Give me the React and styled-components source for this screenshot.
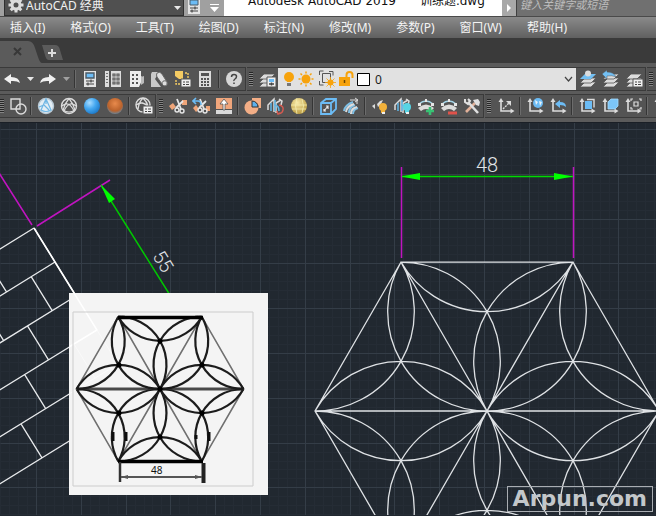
import React from 'react';
import styled, { createGlobalStyle } from 'styled-components';

const GlobalStyle = createGlobalStyle`
*{
  box-sizing: border-box;
}
body{
  margin: 0;
  background: #212830;
  font-family: "Noto Sans", "Noto Sans CJK SC", sans-serif;
  font-size: 12px;
}
button, select, input{
  font: inherit;
  color: inherit;
  margin: 0;
  padding: 0;
  border: 0;
  border-radius: 0;
  background: none;
}
svg{
  display: block;
}
`

const Window = styled.div`
display: flex;
flex-direction: column;
height: 100vh;
overflow: hidden;
`

/* title bar */
const TitleBar = styled.header`
display: flex;
height: 17px;
padding-left: 4px;
overflow: hidden;
background: #a0a0a0;
border-bottom: 1px solid #4a4a4a;
`

const Workspace = styled.label`
display: flex;
align-items: center;
width: 180px;
height: 16px;
padding: 0 2px 0 3px;
background: #505050;
border: 1px solid #303030;
border-top: 0;
color: #f0f0f0;

select{
  flex: 1;
  min-width: 0;
  height: 20px;
  margin: -4px 0 0 2px;
  font-size: 12px;
  line-height: 20px;
  appearance: none;
  outline: none;
}
`

const TitleTool = styled.button`
display: flex;
align-items: center;
justify-content: center;
width: 20px;
height: 16px;
`

const DocTitle = styled.h1`
flex: 1;
display: flex;
gap: 24px;
margin: 0;
padding-left: 24px;
background: #fff;
color: #111;
font-family: "DejaVu Sans", "Noto Sans CJK SC", sans-serif;
font-size: 12px;
font-weight: 400;
line-height: 2px;
white-space: nowrap;
`

const Expand = styled.button`
display: flex;
align-items: center;
justify-content: center;
width: 14px;
height: 16px;
background: #a8a8a8;
`

const Search = styled.input`
width: 140px;
height: 16px;
padding: 0 0 7px 3px;
background: #707070;
border-left: 1px solid #404040;
outline: none;

&::placeholder{
  color: #bdbdbd;
  font-style: italic;
  font-size: 11px;
  opacity: 1;
}
`

const MenuBar = styled.nav`
display: flex;
align-items: center;
gap: 25px;
height: 21px;
padding-left: 10px;
background: linear-gradient(#8a8a8a, #606060);
color: #f4f4f4;
white-space: nowrap;
`

const MenuItem = styled.button`
line-height: 20px;
`

/* file tabs */
const TabBar = styled.div`
display: flex;
height: 25px;
background: #3a3a3a;

svg{
  height: 25px;
}
`

const TabButton = styled.button`
display: block;
`

/* toolbars */
const Toolbars = styled.div`
display: flex;
flex-direction: column;
gap: 3px;
padding: 4px 0;
background: #5b5b5b;
`

const ToolRow = styled.div`
display: flex;
gap: 1px;
height: 24px;
overflow: hidden;
`

const Group = styled.div`
display: flex;
align-items: center;
flex: ${p => (p.$grow ? '1 0 0' : 'none')};
height: 24px;
background: #545454;
border: 1px solid #3a3a3a;
border-width: ${p => (p.$open ? '1px 0' : '1px 1px 1px 0')};
`

const Tool = styled.button`
display: flex;
align-items: center;
justify-content: center;
flex: none;
width: ${p => p.$w || 23}px;
height: 22px;

&:hover{
  background: #6a6a6a;
}
`

const Sep = styled.span`
flex: none;
width: 2px;
height: 18px;
margin: 0 2px;
background: #353535;
border-right: 1px solid #6c6c6c;
`

const Grip = styled.span`
flex: none;
width: 5px;
height: 14px;
margin-right: 2px;
margin-left: ${p => (p.$first ? 0 : 2)}px;
background: repeating-linear-gradient(#262626 0 1px, #858585 1px 2px);
border-right: 1px solid #545454;
`

const LayerBox = styled.label`
display: flex;
align-items: center;
flex: 1;
min-width: 0;
height: 22px;
padding: 0 3px 0 4px;
background: #e1e1e1;
color: #1c1c1c;

select{
  flex: 1;
  min-width: 0;
  height: 20px;
  padding-left: 3px;
  appearance: none;
  outline: none;
}
`

/* drawing area */
const Canvas = styled.main`
position: relative;
flex: 1;
min-height: 0;
overflow: hidden;
background: #212830;
border-top: 1px solid #1a1f26;
`

const Model = styled.svg`
position: absolute;
left: 0;
top: -1px;
width: 100%;
height: 100%;
`

const Sample = styled.figure`
position: absolute;
left: 69px;
top: 170px;
margin: 0;
background: #f4f4f4;
`

const Watermark = styled.div`
position: absolute;
right: 3px;
bottom: 4px;
padding: 0 5px;
border: 1px solid #a9adb2;
color: #c3c7ca;
font: bold 22px/24px "DejaVu Sans", sans-serif;
`

const Icon = ({ size = 18, children }) => (
  <svg width={size} height={size} viewBox="0 0 18 18" fill="none" stroke="#dcdcdc" strokeWidth="1.4">
    {children}
  </svg>
)

const Down = ({ color = '#e8e8e8' }) => (
  <svg width="7" height="4" viewBox="0 0 7 4"><path d="M0 0h7L3.500 4z" fill={color} /></svg>
)

const Gear = () => (
  <svg width="16" height="16" viewBox="0 0 16 16">
    <g transform="translate(8 5)">
      <circle r="4" fill="none" stroke="#dcdcdc" strokeWidth="3" />
      {[0, 45, 90, 135].map(a => (
        <path key={a} transform={`rotate(${a})`} d="M-1.500-7.500h3v3h-3zM-1.500 4.500h3v3h-3z" fill="#dcdcdc" />
      ))}
    </g>
  </svg>
)

const PropsShape = () => (
  <g stroke="none">
    <path d="M3 1h12v16H3z" fill="#e4e4e4" />
    <path d="M5 3h8v5H5z" fill="#6cbcf5" stroke="#4a5a66" />
    <path d="M5 11h8M5 14h8M10 9.500v3M7 12.500v3" stroke="#444" strokeWidth="1.200" />
  </g>
)

const Scissors = () => (
  <g>
    <path d="M8 2l4 10M14 4l-7 7" strokeWidth="1.800" stroke="#e6e6e6" />
    <circle cx="8" cy="13" r="2" stroke="#e6e6e6" />
    <circle cx="13" cy="14" r="2" stroke="#e6e6e6" />
  </g>
)

const Axes = ({ children }) => (
  <Icon>
    <path d="M4 3v11h12" strokeWidth="1.600" />
    <path d="M1.500 5L4 1l2.500 4zM13.500 11.500l4 2.500-4 2.500z" fill="#dcdcdc" stroke="none" />
    {children}
  </Icon>
)

const sheets = (
  <g fill="#dcdcdc" stroke="#545454" strokeWidth="0.800">
    <path d="M1 17l5-5h11l-5 5z" />
    <path d="M1 13l5-5h11l-5 5z" />
    <path d="M1 9l5-5h11l-5 5z" />
  </g>
)

const listBadge = (
  <g>
    <path d="M8 9h10v8H8z" fill="#f0f0f0" stroke="#545454" strokeWidth="1" />
    <path d="M10 12h2m1 0h3M10 14.500h2m1 0h3" stroke="#444" strokeWidth="1" />
  </g>
)

const arch = (
  <g>
    <path d="M1 11q8-7 16 0l-3 3q-5-4-10 0z" fill="#dcdcdc" stroke="none" />
    <path d="M2 7q7-6 14 0" stroke="#a5d5e8" />
    <path d="M1 6h3v3H1zM14 6h3v3h-3zM8 2h2v3H8z" fill="#e6e6e6" stroke="none" />
  </g>
)

const twist = (
  <g strokeWidth="1.500">
    <path d="M1 13V8l3-3 3-3v13M9 16V6l5-3" />
    <path d="M4 14V6M8 3v11M7 8q5 0 5 6" stroke="#5fb7e8" />
    <path d="M12 2l3 2-1 4" />
  </g>
)

const Bulb = ({ x, y, color }) => (
  <g stroke="none">
    <circle cx={x} cy={y} r="4" fill={color} />
    <path d={`M${x - 2} ${y + 3}h4v3h-4z`} fill={color} />
    <path d={`M${x - 1} ${y + 5}h3v2h-3z`} fill="#eee" />
  </g>
)

const icons = {
  undo: <path d="M1 9l7-5v3q8 0 9 6-3-2.500-9-2V14z" fill="#f0f0f0" stroke="none" />,
  redo: <path d="M17 9l-7-5v3q-8 0-9 6 3-2.500 9-2V14z" fill="#f0f0f0" stroke="none" />,
  properties: <PropsShape />,
  designCenter: (
    <g>
      <path d="M1 1h4v16H1zM7 1h10v16H7z" fill="#dcdcdc" stroke="none" />
      <path d="M3 3v12" stroke="#444" strokeDasharray="1 2" />
      <path d="M9 4h2v2H9zM13 4h2v2h-2zM9 8h2v2H9zM13 8h2v2h-2zM9 12h2v2H9zM13 12h2v2h-2z" stroke="#555" strokeWidth="1.200" />
    </g>
  ),
  palettes: (
    <g stroke="none">
      <path d="M3 1h11v5l2 2-4 9H3z" fill="#ededed" />
      <path d="M5 4h2v2H5zM9 4h2v2H9zM5 8h2v2H5zM9 8h2v2H9zM5 12h2v2H5zM9 12h2v2H9z" fill="#555" />
      <path d="M14 7l3-1v7l-3 2z" fill="#bbb" />
    </g>
  ),
  sheetSet: (
    <g>
      <path d="M2 2h7l-4 7 6 8H1V4z" fill="#c9c9c9" stroke="none" />
      <path d="M7 3q3-2 5 1l5 8q1 4-2 4-2 0-3-2L7 7q-1-2 0-4z" fill="#dedede" stroke="#666" strokeWidth="1" />
      <path d="M12 14q0-4 4-3" stroke="#666" strokeWidth="1" />
    </g>
  ),
  markup: (
    <g>
      <path d="M2 1h8v8H6l-4-3z" fill="#f4cb63" stroke="none" />
      <path d="M12 3h3v5M3 10v4h4" stroke="#f4cb63" strokeDasharray="2 1" />
      {listBadge}
    </g>
  ),
  calc: (
    <g stroke="none">
      <path d="M3 1h12v16H3z" fill="#dcdcdc" />
      <path d="M5 3h8v3H5zM5 8h2v2H5zM8 8h2v2H8zM11 8h2v2h-2zM5 11h2v2H5zM8 11h2v2H8zM11 11h2v2h-2zM5 14h2v2H5zM8 14h2v2H8zM11 14h2v2h-2z" fill="#555" />
    </g>
  ),
  help: (
    <g>
      <circle cx="9" cy="9" r="8" fill="#d6d6d6" stroke="none" />
      <path d="M6.500 7q0-2.500 2.500-2.500t2.500 2q0 1.500-1.500 2.500T9 11M9 12.500v1.500" stroke="#444" strokeWidth="1.500" />
    </g>
  ),
  layerProps: (
    <g>
      {sheets}
      <path d="M9 7h9v10H9z" fill="#eee" stroke="#545454" strokeWidth="1" />
      <path d="M11 9h5v3h-5z" fill="#6cbcf5" stroke="none" />
      <path d="M11 14h5M13.500 12.500v3" stroke="#444" />
    </g>
  ),
  layerCurrent: (
    <g>
      {sheets}
      <path d="M1 9l5-5h11l-5 5z" fill="#72bff3" stroke="none" />
      <circle cx="9" cy="3.500" r="3" fill="#dcdcdc" stroke="none" />
    </g>
  ),
  layerPrev: (
    <g>
      {sheets}
      <path d="M0 4l5-4v2q7 0 9 5-4-2-9-1v3z" fill="#72bff3" stroke="#545454" strokeWidth="0.500" />
    </g>
  ),
  layerState: <g>{sheets}{listBadge}</g>,
  shapes: <g><path d="M2 2h9v10H2z" /><circle cx="12" cy="12" r="5" /></g>,
  sphereA: (
    <g>
      <circle cx="9" cy="9" r="7.500" fill="#e3eef5" stroke="#b9cad6" />
      <path d="M9 2L4 13q5 3 10 0zM9 2v5M2 10l5-2 5 5" stroke="#6fb6e4" strokeWidth="1.200" />
    </g>
  ),
  sphereB: (
    <g>
      <circle cx="9" cy="9" r="7.500" />
      <path d="M9 1.500Q5 6 3 13q6 4 12 0-2-7-6-11.500M2 9q7-6 12 5M16 9Q9 3 4 14" strokeWidth="1.200" />
    </g>
  ),
  ballBlue: <circle cx="9" cy="9" r="8" fill="url(#blueBall)" stroke="none" />,
  ballOrange: <circle cx="9" cy="9" r="8" fill="url(#orangeBall)" stroke="none" />,
  visualStyles: (
    <g>
      <circle cx="8" cy="8" r="7" />
      <path d="M8 1Q4 5 3 12M8 1q4 4 5 8M1 8q7-5 12 2" />
      {listBadge}
    </g>
  ),
  cut: <g><path d="M0 9l4-3 3 4-4 3zM13 3h5v5h-5z" fill="#efa579" stroke="none" /><Scissors /></g>,
  cutBack: (
    <g>
      <path d="M1 11l3-3 3 4-3 3zM14 9h4v5h-4z" fill="#efa579" stroke="none" />
      <Scissors />
      <path d="M1 4h5q3 0 3 4M4 1L1 4l3 3" fill="none" stroke="#6cbcf5" strokeWidth="1.600" />
    </g>
  ),
  extrude: (
    <g stroke="none">
      <path d="M1 1h16v11H1z" fill="#f0a67c" />
      <path d="M1 13h16v4H1z" fill="#dadada" />
      <path d="M9 2l4 5h-3v6H8V7H5z" fill="#fff" stroke="#555" strokeWidth="0.800" />
    </g>
  ),
  subtract: (
    <g>
      <path d="M8 1h9v10h-2a7 7 0 0 0-7-7z" fill="#f3ae86" stroke="none" />
      <circle cx="7.500" cy="10.500" r="7" fill="#f3ae86" stroke="none" />
      <path d="M8 4v6h6a6 6 0 0 0-6-6z" fill="#5db0ec" stroke="#333" strokeWidth="1" />
    </g>
  ),
  twistRed: <g>{twist}<path d="M12 8q5 1 4 5t-4 3M10 14l1 3 3-1" stroke="#d85a50" /></g>,
  globe: (
    <g>
      <circle cx="9" cy="9" r="8" fill="url(#goldBall)" stroke="none" />
      <path d="M1 8h16M2 12h14M7 1q-3 8 0 16M12 2q3 7 0 14" stroke="#f5edb0" strokeWidth="0.800" />
    </g>
  ),
  box: (
    <g stroke="#6cbcf5" strokeWidth="1.800">
      <path d="M2 6l5-4h10v10l-5 5H2zM2 6h10v11M12 6l5-4" />
      <path d="M5 14l4-5M7 9h2v3M5 12v2h2" stroke="#e8e8e8" strokeWidth="1.200" />
    </g>
  ),
  sweep: (
    <g strokeWidth="2">
      <path d="M2 14q1-6 9-9M7 16q0-6 6-8M11 17q0-5 5-6" stroke="#7ec0e6" />
      <path d="M4 15q1-6 8-8M9 17q0-6 6-7" />
      <path d="M8 3h7v4M13 1l3 2-3 2" strokeWidth="1" />
    </g>
  ),
  bulbArc: <g><path d="M1 9l3-2v5zM6 7l3-3 3-1-2 4-3 3z" fill="#dcdcdc" stroke="none" /><Bulb x={12} y={10} color="#f2b13a" /></g>,
  bulbTwist: <g>{twist}<Bulb x={13} y={10} color="#58d4e4" /></g>,
  archPlus: <g>{arch}<path d="M9 14h8M13 10v8" stroke="#38c274" strokeWidth="2.600" /></g>,
  archMinus: <g>{arch}<path d="M8 16h9" stroke="#e0524a" strokeWidth="3" /></g>,
  wrench: (
    <g stroke="#e0e0e0">
      <path d="M12 6L3 15" stroke="#e2b199" strokeWidth="2.600" />
      <path d="M5 5l10 11" strokeWidth="2.600" />
      <path d="M2 2v3l3 2 2-3-2-2" strokeWidth="2" />
      <path d="M10 3l5-1 2 3-1 4-3-1z" fill="#e0e0e0" stroke="none" />
    </g>
  ),
}

const T = ({ name, label, w }) => (
  <Tool type="button" aria-label={label || name} $w={w}>
    <Icon>{icons[name]}</Icon>
  </Tool>
)

const U = ({ label, children }) => (
  <Tool type="button" aria-label={label}><Axes>{children}</Axes></Tool>
)

const menus = ['插入(I)', '格式(O)', '工具(T)', '绘图(D)', '标注(N)', '修改(M)', '参数(P)', '窗口(W)', '帮助(H)']

const Defs = () => (
  <svg width="0" height="0" style={{ position: 'absolute' }} aria-hidden="true">
    <defs>
      <radialGradient id="blueBall" cx="0.35" cy="0.3" r="0.75">
        <stop offset="0" stopColor="#a8dcff" />
        <stop offset="0.5" stopColor="#45a8f0" />
        <stop offset="1" stopColor="#1c78c8" />
      </radialGradient>
      <radialGradient id="orangeBall" cx="0.5" cy="0.35" r="0.65">
        <stop offset="0" stopColor="#e88a4c" />
        <stop offset="0.7" stopColor="#b9622c" />
        <stop offset="1" stopColor="#6d8292" />
      </radialGradient>
      <radialGradient id="goldBall" cx="0.4" cy="0.3" r="0.75">
        <stop offset="0" stopColor="#f8eaa8" />
        <stop offset="1" stopColor="#b8983c" />
      </radialGradient>
    </defs>
  </svg>
)

/* hexagon split in six triangles, three arcs meet in the middle of each */
function hexagon(cx, cy, r) {
  const h = r * Math.sqrt(3) / 2
  const v = [[r, 0], [r / 2, h], [-r / 2, h], [-r, 0], [-r / 2, -h], [r / 2, -h]].map(([x, y]) => [cx + x, cy + y])
  const a = r / Math.sqrt(3)
  const arc = (p, q) => `M${p[0]} ${p[1]}A${a} ${a} 0 0 0 ${q[0]} ${q[1]}`
  const o = [cx, cy]
  return {
    outline: `M${v.map(p => p.join(' ')).join('L')}Z`,
    spokes: v.map(p => `M${cx} ${cy}L${p[0]} ${p[1]}`).join(''),
    arcs: v.map((p, i) => {
      const q = v[(i + 1) % 6]
      return arc(o, p) + arc(p, q) + arc(q, o)
    }).join(''),
  }
}

/* brick courses, u runs down the edge and w runs to the left */
function bricks() {
  const at = (k, w) => `${34 + 21 * k - 0.851 * w} ${228 + 34 * k + 0.525 * w}`
  let d = `M${at(0, 0)}L${at(5, 0)}`
  for (let k = 0; k < 6; k++) {
    d += `M${at(k, 0)}L${at(k, 240)}`
    if (k === 5) break
    for (let w = k % 2 ? 28 : 57; w < 240; w += 57) d += `M${at(k, w)}L${at(k + 1, w)}`
  }
  return d
}

const Grid = () => {
  const lines = []
  for (let i = -4; i < 240; i++) {
    const major = i % 5 === 0
    const x = 36 + Math.round(i * 8.96)
    const y = 129 + Math.round(i * 8.96)
    const color = major ? '#343d47' : '#252c35'
    lines.push(<path key={i} d={`M${x} 120v2000M0 ${y}h2400`} stroke={color} />)
  }
  return <g transform="translate(0.5 0.5)" strokeWidth="1">{lines.filter((l, i) => (i - 4) % 5)}{lines.filter((l, i) => (i - 4) % 5 === 0)}</g>
}

const Drawing = () => {
  const hex = hexagon(487, 411, 172)
  return (
    <Model>
      <g transform="translate(0 -122)" fill="none" strokeWidth="1.3">
        <Grid />
        <path d={bricks()} stroke="#e8eaec" />
        <path d="M34 228L76 296" stroke="#fff" strokeWidth="1.600" />
        <path d="M-6 165L32 225M37 226L110 180" stroke="#c014c0" strokeWidth="1.5" />
        <path d="M101 185L200 343" stroke="#00c800" strokeWidth="1.5" />
        <path d="M101 185l14 14-6 4z" fill="#00ff00" stroke="none" />
        <text transform="translate(152 256) rotate(58)" fill="#e0e3e6" fontFamily="Roboto" fontWeight="300" fontSize="19">55</text>
        <path d={hex.outline + hex.spokes + hex.arcs} stroke="#dfe2e5" />
        <path d="M401.500 167V258M573.500 167V258" stroke="#c014c0" strokeWidth="1.500" />
        <path d="M402 176.500H573" stroke="#00d800" strokeWidth="1.500" />
        <path d="M401 176.500l19-3.500v7zM573 176.500l-19-3.500v7z" fill="#00ff00" stroke="none" />
        <text x="476" y="172" fill="#e0e3e6" fontFamily="Roboto" fontWeight="300" fontSize="20">48</text>
      </g>
    </Model>
  )
}

const SampleDrawing = () => {
  const hex = hexagon(91, 96, 83.5)
  return (
    <svg width="199" height="202" viewBox="0 0 199 202" fill="none">
      <defs>
        <filter id="soft"><feGaussianBlur stdDeviation="0.7" /></filter>
      </defs>
      <path d="M5 0L28 37L0 54" stroke="#fff" strokeWidth="1.500" />
      <path d="M28 37L70 105M5 51L26 85M49 71L0 101" stroke="#fafafa" />
      <g filter="url(#soft)">
        <path d="M4 19h180v174H4z" stroke="#cdcdcd" />
        <path d={hex.outline + hex.spokes} stroke="#707070" strokeWidth="1.600" />
        <path d="M8 96H175" stroke="#4a4a4a" strokeWidth="2.800" />
        <path d={hex.arcs} stroke="#1c1c1c" strokeWidth="2.200" />
        <path d="M49 24.500H134M49 168.500H134" stroke="#000" strokeWidth="3.400" />
        <g fill="#000">
          {[[91, 96], [91, 48], [91, 144], [50, 72], [133, 72], [50, 120], [133, 120]].map(([x, y]) => (
            <circle key={`${x}-${y}`} cx={x} cy={y} r="2.500" />
          ))}
        </g>
        <path d="M44 139v9M57 139v9M127 142v4M140 139v9" stroke="#111" strokeWidth="3" />
        <path d="M51 169v20" stroke="#333" strokeWidth="2.500" />
        <path d="M134.500 170v20" stroke="#222" strokeWidth="4" />
        <path d="M52 184H133" stroke="#555" strokeWidth="1.800" />
        <path d="M52 184l7-2v4zM133 184l-7-2v4z" fill="#555" />
      </g>
      <text x="82" y="181" fill="#111" fontFamily="Noto Sans" fontSize="10">48</text>
    </svg>
  )
}

const LayerIcons = () => (
  <svg width="90" height="20" viewBox="283 69 90 20" fill="none">
    <circle cx="290" cy="77" r="5" fill="#f7a30c" />
    <path d="M287 79h6l-1 3h-4z" fill="#f7a30c" />
    <path d="M288 83h4v3h-4z" fill="#777" />
    <circle cx="307" cy="79" r="4.500" fill="#f7a30c" />
    <path d="M307 71.500v2M307 84.500v2M299.500 79h2M312.500 79h2M301.500 73.500l1.500 1.500M311 83l1.500 1.500M312.500 73.500l-1.500 1.500M303 83l-1.500 1.500" stroke="#f7a30c" strokeWidth="1.500" />
    <path d="M320.500 75v-4h4M330 71.500h4v4M320.500 81v4h4" stroke="#555" />
    <path d="M323.500 73.500h8v9h-8z" stroke="#555" />
    <circle cx="331.500" cy="82.500" r="3" fill="#f7a30c" />
    <path d="M331.500 77v11M326 82.500h11M327.500 78.500l8 8M335.500 78.500l-8 8" stroke="#f7a30c" strokeWidth="0.800" />
    <path d="M340 77h11v9h-11z" fill="#f7a30c" />
    <path d="M347.500 77v-2q0-3 3-3t3 3v3" stroke="#f7a30c" strokeWidth="2" />
    <path d="M345.500 80v3" stroke="#704800" strokeWidth="1.500" />
    <path d="M358.500 73.500h12v12h-12z" fill="#fff" stroke="#000" />
  </svg>
)

const App = () => (
  <Window>
    <GlobalStyle />
    <Defs />
    <TitleBar>
      <Workspace>
        <Gear />
        <select aria-label="工作空间">
          <option>AutoCAD 经典</option>
        </select>
        <Down />
      </Workspace>
      <TitleTool type="button" aria-label="特性">
        <svg width="18" height="18" viewBox="0 2 18 18"><PropsShape /></svg>
      </TitleTool>
      <TitleTool type="button" aria-label="自定义">
        <svg width="9" height="8" viewBox="0 0 9 8"><path d="M0 0h9v1H0zM0 3h9L4.500 8z" fill="#fff" /></svg>
      </TitleTool>
      <DocTitle>
        <span>Autodesk AutoCAD 2019</span>
        <span>训练题.dwg</span>
      </DocTitle>
      <Expand type="button" aria-label="展开">
        <svg width="4" height="8" viewBox="0 0 4 8"><path d="M0 0l4 4-4 4z" fill="#fff" /></svg>
      </Expand>
      <Search type="text" aria-label="搜索" placeholder="键入关键字或短语" />
    </TitleBar>

    <MenuBar>
      {menus.map(m => <MenuItem key={m} type="button">{m}</MenuItem>)}
    </MenuBar>

    <TabBar>
      <TabButton type="button" aria-label="关闭">
        <svg width="42" height="25" viewBox="0 0 42 25">
          <path d="M0 3h28q5 0 7 7l3 9q2 6 4 6H0z" fill="#5b5b5b" />
          <path d="M14 10l7 7M21 10l-7 7" stroke="#383838" strokeWidth="2" />
        </svg>
      </TabButton>
      <TabButton type="button" aria-label="新图形">
        <svg width="22" height="25" viewBox="0 0 22 25">
          <path d="M0 7h13q4 0 5 5l3 10H7q-3 0-4-5z" fill="#5b5b5b" />
          <path d="M10 11v8M6 15h8" stroke="#ddd" strokeWidth="2" />
        </svg>
      </TabButton>
    </TabBar>

    <Toolbars>
      <ToolRow>
        <Group>
          <T name="undo" label="放弃" w={24} />
          <Tool type="button" aria-label="放弃列表" $w={12}><Down /></Tool>
          <T name="redo" label="重做" w={24} />
          <Tool type="button" aria-label="重做列表" $w={12}><Down color="#a0a0a0" /></Tool>
          <Sep />
          <T name="properties" />
          <T name="designCenter" />
          <T name="palettes" />
          <T name="sheetSet" />
          <T name="markup" />
          <T name="calc" />
          <Sep />
          <T name="help" />
        </Group>
        <Group $grow>
          <Grip />
          <T name="layerProps" w={22} />
          <LayerBox>
            <LayerIcons />
            <select aria-label="图层">
              <option>0</option>
            </select>
            <svg width="9" height="6" viewBox="0 0 9 6" fill="none"><path d="M1 1l3.500 4L8 1" stroke="#444" strokeWidth="1.200" /></svg>
          </LayerBox>
          <T name="layerCurrent" />
          <T name="layerPrev" />
          <T name="layerState" />
        </Group>
        <Group $open>
          <Grip />
        </Group>
      </ToolRow>
      <ToolRow>
        <Group>
          <Grip $first />
          <T name="shapes" w={21} />
          <Sep />
          <T name="sphereA" />
          <T name="sphereB" />
          <T name="ballBlue" />
          <T name="ballOrange" />
          <Sep />
          <T name="visualStyles" />
        </Group>
        <Group>
          <Grip />
          <T name="cut" />
          <T name="cutBack" />
          <T name="extrude" />
          <Sep />
          <T name="subtract" />
          <T name="twistRed" />
          <T name="globe" />
          <Sep />
          <T name="box" />
          <T name="sweep" />
          <Sep />
          <T name="bulbArc" />
          <T name="bulbTwist" />
          <T name="archPlus" />
          <T name="archMinus" />
          <T name="wrench" />
        </Group>
        <Group $grow $open>
          <Grip />
          <U label="UCS">
            <path d="M6 12l6-6" strokeDasharray="2 1" />
            <path d="M14 4v5L9 4z" fill="#dcdcdc" stroke="none" />
          </U>
          <Sep />
          <U label="世界 UCS">
            <circle cx="12" cy="6" r="5" fill="#6cbcf5" stroke="none" />
            <path d="M9 3l3 2-2 3zM13 4l3 1-2 4z" fill="#e8f3fa" stroke="none" />
          </U>
          <U label="上一个 UCS"><path d="M6 7l5-4v2q6 0 6 5-2-2-6-2v3z" fill="#6cbcf5" stroke="none" /></U>
          <Sep />
          <U label="面 UCS">
            <path d="M7 4h7v8H7z" fill="#6cbcf5" stroke="none" />
            <path d="M9 2.500h7v8" />
          </U>
          <U label="对象 UCS"><path d="M7 5l3-3h7v7l-3 3H7z" fill="#7cc5f7" stroke="#a5dcff" strokeWidth="0.800" /></U>
          <U label="视图 UCS">
            <path d="M7 4V2h2M15 2h2v2M17 10v2h-2M9 12H7v-2" strokeWidth="1.200" />
            <path d="M10 5h4v4h-4z" strokeWidth="1.200" />
          </U>
          <Sep />
          <U label="原点 UCS" />
        </Group>
      </ToolRow>
    </Toolbars>

    <Canvas>
      <Drawing />
      <Sample><SampleDrawing /></Sample>
      <Watermark>Arpun.com</Watermark>
    </Canvas>
  </Window>
)

export default App;
